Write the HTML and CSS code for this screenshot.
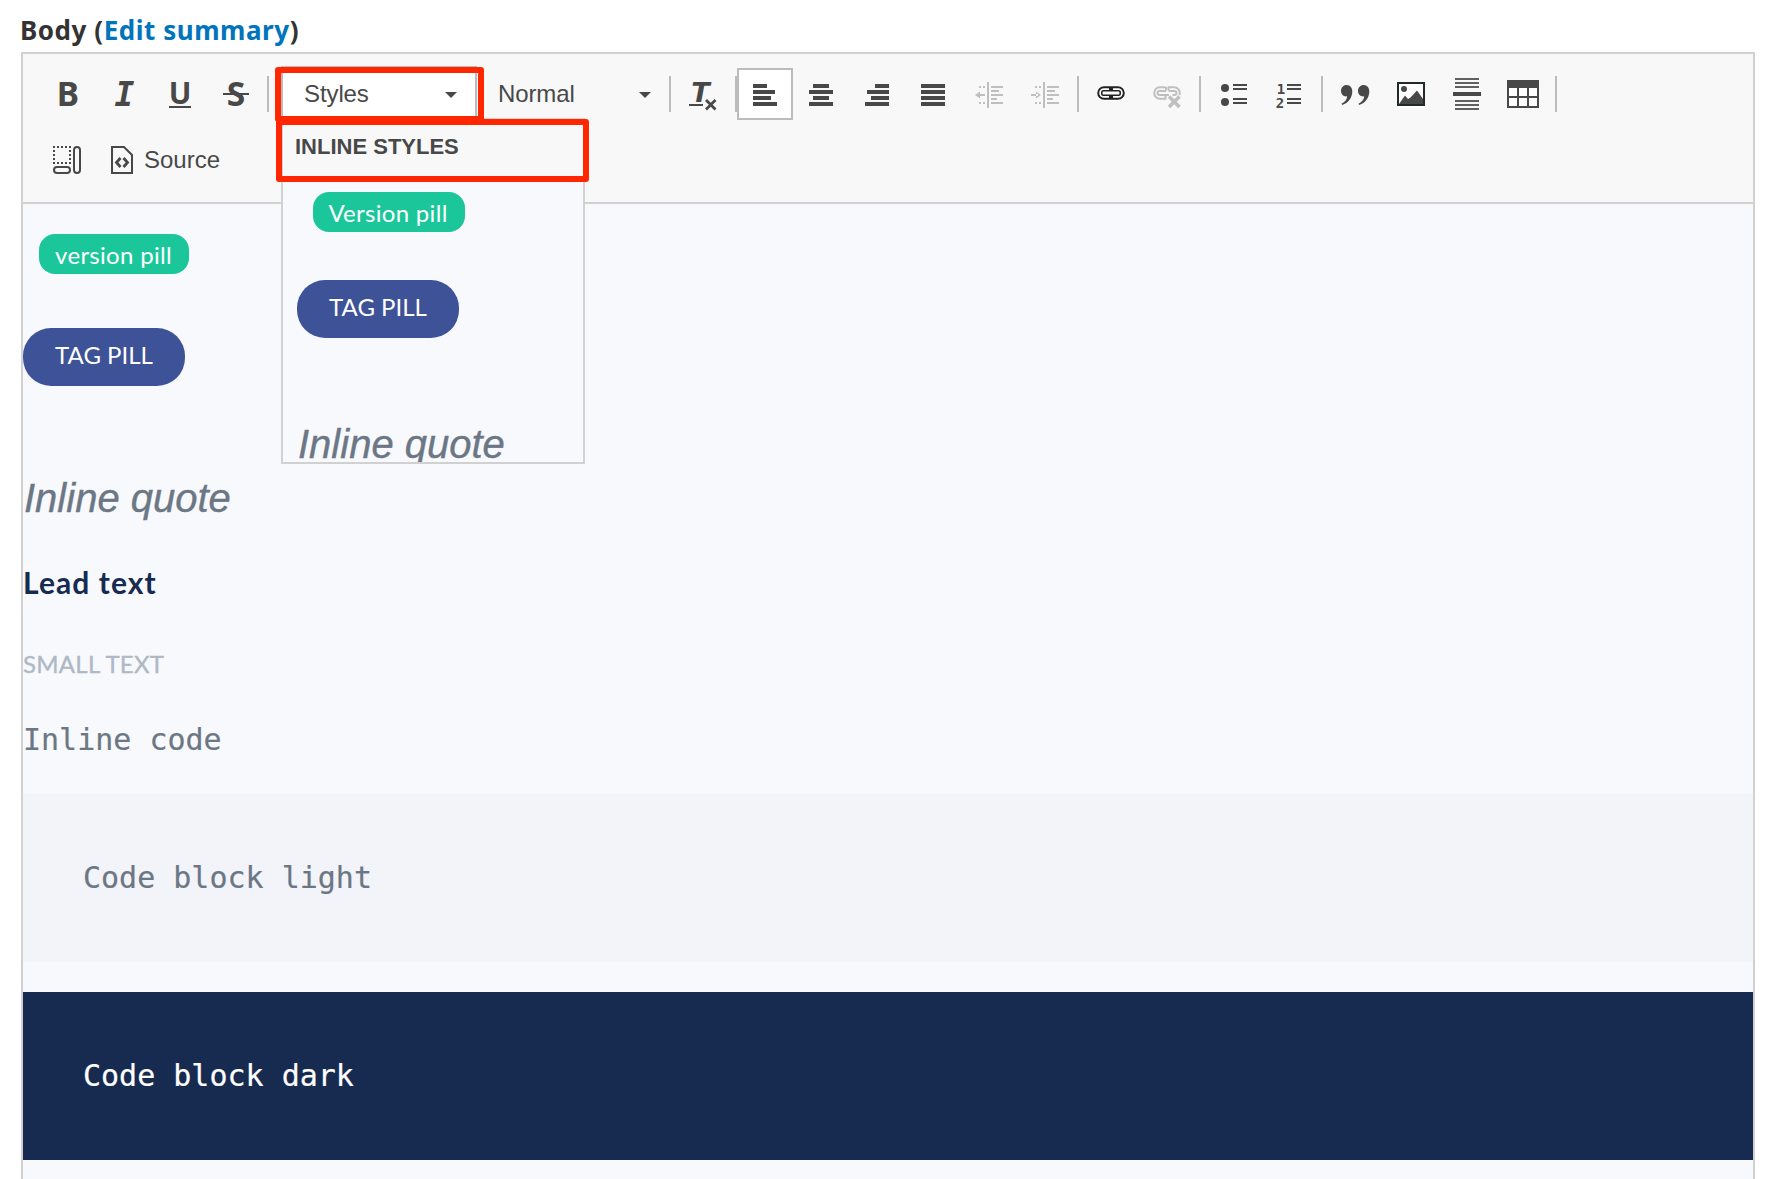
FILE: index.html
```html
<!DOCTYPE html>
<html lang="en">
<head>
<meta charset="utf-8">
<title>Body editor</title>
<link rel="stylesheet" href="styles.css">
</head>
<body>
<div class="label"><span class="label-a">Body (</span><a class="label-b">Edit summary</a><span>)</span></div>
<div class="editor">
  <div class="toolbar">
    <div class="row">
      <svg class="btn" viewBox="0 0 56 52"><text class="glyph" x="29" y="38">B</text></svg>
      <svg class="btn" viewBox="0 0 56 52"><text class="glyph slab" x="29.5" y="38">I</text></svg>
      <svg class="btn" viewBox="0 0 56 52"><text class="glyph under" x="29" y="35.5">U</text><path d="M18 38h22v2H18z"/></svg>
      <svg class="btn" viewBox="0 0 56 52"><text class="glyph" x="29" y="38">S</text><path d="M16 25h26v2H16z"/></svg>
      <i class="sep"></i>
      <div class="combo open"><span>Styles</span><svg class="arrow" viewBox="0 0 12 6"><path d="M0 0h12L6 6z"/></svg></div>
      <div class="combo"><span>Normal</span><svg class="arrow" viewBox="0 0 12 6"><path d="M0 0h12L6 6z"/></svg></div>
      <i class="sep first"></i>
      <svg class="btn" viewBox="0 0 56 52"><text class="glyph tee" x="25.5" y="34">T</text><path d="M14 36h14v2H14z"/><path class="line w3" d="M31 32l9.500 9.500M40.500 32L31 41.500"/></svg>
      <i class="sep tight"></i>
      <svg class="btn active" viewBox="0 0 56 52"><path d="M16 16h14v4H16zM16 22h22v4H16zM16 28h18v4H16zM16 34h24v4H16z"/></svg>
      <svg class="btn" viewBox="0 0 56 52"><path d="M20 16h16v4H20zM16 22h24v4H16zM20 28h16v4H20zM16 34h24v4H16z"/></svg>
      <svg class="btn" viewBox="0 0 56 52"><path d="M26 16h14v4H26zM18 22h22v4H18zM22 28h18v4H22zM16 34h24v4H16z"/></svg>
      <svg class="btn" viewBox="0 0 56 52"><path d="M16 16h24v4H16zM16 22h24v4H16zM16 28h24v4H16zM16 34h24v4H16z"/></svg>
      <svg class="btn off" viewBox="0 0 56 52"><path d="M26 14h2v26h-2zM30 18h12v2H30zM30 22h8v2h-8zM30 26h12v2H30zM30 30h6v2h-6zM30 34h12v2H30zM18 18h2v2h-2zM22 18h2v2h-2zM18 34h2v2h-2zM22 34h2v2h-2zM17 26h7v2h-7zM14 27l5-3.500v7z"/></svg>
      <svg class="btn off" viewBox="0 0 56 52"><path d="M26 14h2v26h-2zM30 18h12v2H30zM30 22h8v2h-8zM30 26h12v2H30zM30 30h6v2h-6zM30 34h12v2H30zM18 18h2v2h-2zM22 18h2v2h-2zM18 34h2v2h-2zM22 34h2v2h-2zM14 26h7v2h-7zM24 27l-5-3.500v7z"/></svg>
      <i class="sep"></i>
      <svg class="btn link" viewBox="0 0 56 52"><rect class="halo" x="14" y="18" width="28" height="15" rx="6"/><path class="line w2" d="M26.500 19.200h-5.500a5.800 5.800 0 0 0 0 11.600h5.500M29.500 19.200h5.500a5.800 5.800 0 0 1 0 11.600h-5.500M27 18.200v4M29 18.200v4M27 28v3.800M29 28v3.800"/><rect class="line w15" x="18.800" y="22.800" width="18.400" height="4.400" rx="1.500"/></svg>
      <svg class="btn off" viewBox="0 0 56 52"><path class="line w2" d="M26.500 19.200h-5.500a5.800 5.800 0 0 0 0 11.600h5.500v-3.500M29.500 22.500v-3.300h5.500a5.800 5.800 0 0 1 5.500 8M27 19v3.500M27 23h-6.500a2 2 0 0 0 0 4H30M29.500 23h6a2 2 0 0 1 0 4h-2"/><path class="line w4" d="M30 28.500l10.500 10.500M40.500 28.500L30 39"/></svg>
      <i class="sep"></i>
      <svg class="btn" viewBox="0 0 56 52"><circle cx="20" cy="20" r="4"/><circle cx="20" cy="34" r="4"/><path d="M28 16h14v2H28zM28 20h14v2H28zM28 30h14v2H28zM28 34h14v2H28z"/></svg>
      <svg class="btn" viewBox="0 0 56 52"><text class="digit" x="20" y="26">1</text><text class="digit" x="19" y="40">2</text><path d="M26 16h14v2H26zM26 20h14v2H26zM26 30h14v2H26zM26 34h14v2H26z"/></svg>
      <i class="sep"></i>
      <svg class="btn" viewBox="0 0 56 52"><path d="M19.500 17c4 0 5.800 3 5.800 6.500 0 6-4 11.500-10 13.500l-.8-1.300c3.500-1.700 5.500-4.500 5.700-7.400-3.700.6-6.200-2-6.200-5.300 0-3.500 2.500-6 5.500-6zM36.500 17c4 0 5.800 3 5.800 6.500 0 6-4 11.500-10 13.500l-.8-1.300c3.500-1.700 5.500-4.500 5.700-7.400-3.700.6-6.200-2-6.200-5.300 0-3.500 2.500-6 5.500-6z"/></svg>
      <svg class="btn" viewBox="0 0 56 52"><path class="white" d="M14 14h28v26H14z"/><path class="dark" d="M14 14h28v24H14zM16 16v20h24V16z" fill-rule="evenodd"/><circle cx="21" cy="21" r="3"/><path d="M16 36l6-8.500 3 3.500 2.500-1.500 6.500-7L40 31v5z"/></svg>
      <svg class="btn" viewBox="0 0 56 52"><path class="soft" d="M16 10h24v2H16zM16 14h24v2H16zM16 18h24v2H16zM16 32h24v2H16zM16 36h24v2H16zM16 40h24v2H16z"/><path d="M14 24h28v4H14z"/></svg>
      <svg class="btn" viewBox="0 0 56 52"><path d="M12 12h32v28H12z"/><path class="white" d="M14 20h8v8h-8zM24 20h8v8h-8zM34 20h8v8h-8zM14 30h8v8h-8zM24 30h8v8h-8zM34 30h8v8h-8z"/></svg>
      <i class="sep"></i>
    </div>
    <div class="row second">
      <svg class="btn" viewBox="0 0 56 52"><path d="M14 12h2v2h-2zM18 12h2v2h-2zM22 12h2v2h-2zM26 12h2v2h-2zM30 12h2v2h-2zM14 16h2v2h-2zM14 20h2v2h-2zM14 24h2v2h-2zM14 28h2v2h-2zM18 28h2v2h-2zM22 28h2v2h-2zM26 28h2v2h-2zM30 28h2v2h-2zM30 16h2v2h-2zM30 20h2v2h-2zM30 24h2v2h-2z"/><rect class="line w2" x="35" y="13" width="6" height="26" rx="3"/><rect class="line w2" x="15" y="33" width="16" height="6" rx="3"/></svg>
      <svg class="btn source" viewBox="0 0 49 52"><path class="line w2" d="M17 13h12l8 8v18H17zM29 13"/><path class="line w3" d="M25.500 24l-4 4.500 4 4.500M28.500 24l4 4.500-4 4.500"/></svg>
      <span class="source-text">Source</span>
    </div>
  </div>
  <div class="content">
    <div class="version-pill in-body">version pill</div>
    <div class="tag-pill">TAG PILL</div>
    <div class="quote in-body-quote">Inline quote</div>
    <div class="lead">Lead text</div>
    <div class="small">SMALL TEXT</div>
    <div class="code">Inline code</div>
    <div class="block light">Code block light</div>
    <div class="block navy">Code block dark</div>
  </div>
  <div class="panel">
    <div class="panel-head">INLINE STYLES</div>
    <div class="version-pill in-panel">Version pill</div>
    <div class="tag-pill in-panel-tag">TAG PILL</div>
    <div class="quote in-panel-quote">Inline quote</div>
  </div>
  <div class="mark mark-button"></div>
  <div class="mark mark-head"></div>
</div>
</body>
</html>
```
FILE: styles.css
```css
* { box-sizing: border-box; }
html, body { margin: 0; height: 1179px; overflow: hidden; background: #fff; }
body { font-family: "Liberation Sans", Arial, sans-serif; color: #484848; }

.label {
  height: 52px; padding: 12px 0 0 20px;
  font: 700 26px/36px "Noto Sans", sans-serif;
  letter-spacing: .54px; color: #333; white-space: pre;
}
.label-b { color: #0074bd; }

.editor {
  position: relative;
  width: 1734px; height: 1140px; margin-left: 21px;
  border: 2px solid #d1d1d1; border-bottom: 0;
}
.toolbar {
  height: 150px; padding: 14px 0 0 16px;
  background: #f8f8f8; border-bottom: 2px solid #d1d1d1;
}
.row { display: flex; height: 52px; font-size: 24px; line-height: 52px; }
.second { margin-top: 14px; }
.btn { flex: none; width: 56px; height: 52px; fill: #484848; stroke: none; }
.active { background: #fff; outline: 2px solid #bcbcbc; outline-offset: -2px; }
.source { width: 49px; }
.off { fill: #bfbfbf; }
.line { fill: none; stroke: #484848; }
.off .line { stroke: #bfbfbf; }
.link .line { stroke: #222; }
.halo { fill: #fff; }
.w15 { stroke-width: 1.600; }
.w2 { stroke-width: 2; }
.w3 { stroke-width: 2.800; }
.w4 { stroke-width: 3.600; }
.white { fill: #fff; }
.dark { fill: #222b2b; }
.soft { fill: #606060; }
.glyph { font: 700 33.500px "Noto Sans", sans-serif; text-anchor: middle; }
.slab { font: italic 700 33px "DejaVu Sans Mono", monospace; }
.under { font-size: 30px; }
.tee { font: italic 700 27px "DejaVu Sans", sans-serif; }
.digit { font: 700 14px "DejaVu Sans Mono", monospace; text-anchor: middle; }
.sep { flex: none; width: 2px; height: 36px; margin: 8px 4px 0; background: #bcbcbc; }
.sep.first { margin-left: 0; }
.sep.tight { margin-right: 0; }
.combo {
  display: flex; flex: none; align-items: center; justify-content: space-between;
  width: 194px; padding: 0 18px 0 23px; letter-spacing: -.1px;
}
.combo.open {
  width: 196px; height: 54px; margin: -2px -2px 0 8px; padding: 2px 18px 0 21px;
  background: #fff; border: 2px solid #bcbcbc; line-height: 48px;
}
.arrow { width: 12px; height: 6px; margin-top: 2px; fill: #484848; }

.content { display: flow-root; height: 988px; background: #f8f9fd; }
.version-pill, .tag-pill {
  width: 150px; height: 40px; border-radius: 16px;
  background: #1bc79a; color: #fff; text-align: center;
  font: 24px/41px Lato, sans-serif; white-space: nowrap;
}
.version-pill { padding-right: 1px; letter-spacing: .3px; }
.version-pill.in-body { margin: 30px 0 0 16px; }
.version-pill.in-panel { width: 152px; margin: 10px 0 0 30px; padding-right: 2px; }
.tag-pill {
  width: 162px; height: 58px; margin-top: 54px; border-radius: 28px;
  background: #3e5297; line-height: 53px;
}
.in-panel-tag { margin: 48px 0 0 14px; }
.quote {
  padding-left: 1px; color: #6c7785; white-space: nowrap;
  font: italic 40px/48px "Liberation Sans", Arial, sans-serif;
  -webkit-text-stroke: .4px #6c7785;
}
.in-body-quote { margin-top: 88px; }
.in-panel-quote { margin: 82px 0 0 14px; }
.lead { margin-top: 40px; font: 700 30px/40px Lato, sans-serif; letter-spacing: 1.080px; color: #172b50; }
.small {
  margin-top: 45px; font: 24px/33px Lato, sans-serif; letter-spacing: .25px;
  color: #afb9c5; -webkit-text-stroke: .4px #afb9c5;
}
.code { margin-top: 40px; font: 30px/40px "DejaVu Sans Mono", monospace; color: #6c7785; -webkit-text-stroke: .2px; }
.block {
  margin-top: 34px; height: 168px; padding-left: 60px; -webkit-text-stroke: .2px;
  font: 30px/168px "DejaVu Sans Mono", monospace; color: #6c7785; background: #f3f4f9;
}
.navy { margin-top: 30px; color: #fff; background: #172b50; }

.panel {
  position: absolute; left: 258px; top: 64px; width: 304px; height: 346px;
  overflow: hidden; background: #f8f9fd; border: 2px solid #d1d1d1;
}
.panel-head {
  height: 62px; padding-left: 12px; font-size: 22px; font-weight: 700; line-height: 54px;
  background: #f8f8f8; border-bottom: 2px solid #d1d1d1;
}
.mark { position: absolute; border: 6px solid #ff2600; border-radius: 3px; }
.mark-button { left: 252px; top: 13px; width: 208.500px; height: 55px; }
.mark-head { left: 253px; top: 65px; width: 313px; height: 63px; }
```
